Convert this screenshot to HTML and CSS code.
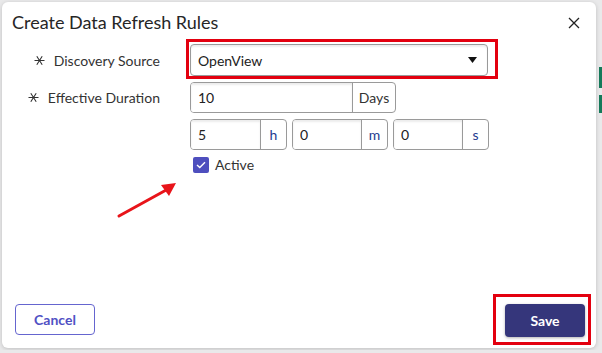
FILE: index.html
```html
<!DOCTYPE html>
<html>
<head>
  <title>Create Data Refresh Rules</title>
  <link rel="stylesheet" href="styles.css">
</head>
<body>
  <div class="backdrop">
    <span class="bar bar-1"></span>
    <span class="bar bar-2"></span>
  </div>

  <div class="dialog">
    <div class="dialog-header">
      <h1>Create Data Refresh Rules</h1>
      <button class="close" type="button" aria-label="Close">
        <svg width="12" height="12" viewBox="0 0 12 12"><path d="M1 1L11 11M11 1L1 11" stroke="#222" stroke-width="1.3" fill="none"/></svg>
      </button>
    </div>

    <form class="dialog-body">
      <div class="form-grid">
        <label class="field-label">
          <svg class="req" width="11" height="11" viewBox="0 0 11 11"><path d="M0.5 5.5H10.5M2.8 1.3L8.2 9.7M8.2 1.3L2.8 9.7" stroke="#333" stroke-width="1.1" fill="none"/></svg>
          Discovery Source
        </label>
        <div class="highlight">
          <div class="select">
            <span>OpenView</span>
            <svg width="9" height="6" viewBox="0 0 9 6"><path d="M0 0H9L4.5 6Z" fill="#111"/></svg>
          </div>
        </div>

        <label class="field-label">
          <svg class="req" width="11" height="11" viewBox="0 0 11 11"><path d="M0.5 5.5H10.5M2.8 1.3L8.2 9.7M8.2 1.3L2.8 9.7" stroke="#333" stroke-width="1.1" fill="none"/></svg>
          Effective Duration
        </label>
        <div class="input-group days">
          <input type="text" value="10">
          <span class="addon">Days</span>
        </div>

        <div></div>
        <div class="time-row">
          <div class="input-group">
            <input type="text" value="5">
            <span class="addon">h</span>
          </div>
          <div class="input-group">
            <input type="text" value="0">
            <span class="addon">m</span>
          </div>
          <div class="input-group">
            <input type="text" value="0">
            <span class="addon">s</span>
          </div>
        </div>

        <div></div>
        <label class="check">
          <span class="box">
            <svg width="10" height="8" viewBox="0 0 10 8"><path d="M1 4L3.8 6.6L9 1.2" stroke="#fff" stroke-width="1.4" fill="none"/></svg>
          </span>
          Active
        </label>
      </div>

      <svg class="arrow" width="70" height="46" viewBox="0 0 70 46">
        <path d="M3 42L52 15" stroke="#e8141a" stroke-width="3" stroke-linecap="round" fill="none"/>
        <path d="M60 9L45 11L53 22Z" fill="#e8141a"/>
      </svg>
    </form>

    <div class="dialog-footer">
      <button class="btn btn-cancel" type="button">Cancel</button>
      <button class="btn btn-save highlight-save" type="button">Save</button>
    </div>
  </div>
</body>
</html>
```

FILE: styles.css
```css
body { margin: 0; background: #e9e9ea; font-family: Lato, "Open Sans", Arial, sans-serif; color: #333; }

.backdrop .bar { position: absolute; left: 599px; width: 3px; background: #157a5a; }
.bar-1 { top: 67px; height: 21px; }
.bar-2 { top: 95px; height: 18px; }

.dialog { position: relative; margin: 2px; width: 594px; height: 346px; background: #fff;
          border-radius: 6px; box-shadow: 0 1px 4px rgba(0,0,0,0.18); display: flex; flex-direction: column; }

.dialog-header { height: 42px; padding: 9px 16px 0 10px; box-sizing: border-box;
                 display: flex; justify-content: space-between; align-items: flex-start; }
.dialog-header h1 { margin: 0; font-size: 18px; line-height: 22px; font-weight: 400; color: #262626; }
.close { border: none; background: none; padding: 0; margin-top: 6px; cursor: pointer; }

.dialog-body { position: relative; flex: 1; }
.form-grid { display: grid; grid-template-columns: 158px 300px; column-gap: 30px; row-gap: 6px; }

.field-label { display: flex; align-items: center; justify-content: flex-end; gap: 9px;
               font-size: 14px; color: #333; }
.req { flex: none; }

.highlight { position: relative; }
.highlight::after { content: ""; position: absolute; top: -5px; left: -4px; right: -8px; bottom: -3px;
                    border: 3px solid #e3000f; pointer-events: none; }

.select { height: 32px; width: 298px; box-sizing: border-box; border: 1px solid #9a9a9a; border-radius: 4px;
          display: flex; align-items: center; justify-content: space-between; padding: 0 10px 0 7px;
          font-size: 14px; color: #222; box-shadow: inset 0 2px 2px rgba(0,0,0,0.07); }

.input-group { display: flex; height: 31px; box-sizing: border-box; border: 1px solid #9a9a9a;
               border-radius: 4px; overflow: hidden; }
.input-group input { flex: 1; min-width: 0; border: none; padding: 0 7px; font: inherit; font-size: 14px;
                     color: #222; box-shadow: inset 0 2px 2px rgba(0,0,0,0.08); outline: none; }
.addon { display: flex; align-items: center; justify-content: center; border-left: 1px solid #9a9a9a;
         font-size: 14px; color: #333; padding: 0 4px; min-width: 17px; }
.days { width: 206px; }
.days .addon { width: 34px; }

.time-row { display: grid; grid-template-columns: 97px 96px 96px; gap: 5px; }
.time-row .addon { color: #1d3b8f; }

.check { display: flex; align-items: center; gap: 6px; margin: 0 0 0 3px; font-size: 14px; color: #333; }
.box { width: 16px; height: 16px; background: #4e4fbe; border-radius: 2px;
       display: flex; align-items: center; justify-content: center; }

.arrow { position: absolute; left: 114px; top: 130px; }

.dialog-footer { display: flex; justify-content: space-between; padding: 0 11px 11px 13px; }
.btn { height: 31px; width: 80px; border-radius: 4px; font: inherit; font-size: 14px; font-weight: 700; cursor: pointer; }
.btn-cancel { background: #fff; color: #5050c4; border: 1px solid #6565cf; }
.btn-save { height: 33px; background: #35367b; color: #fff; border: none; box-shadow: 0 1px 3px rgba(0,0,0,0.3); }
.highlight-save { position: relative; }
.highlight-save::after { content: ""; position: absolute; top: -10px; left: -12px; right: -6px; bottom: -8px;
                         border: 3px solid #e3000f; }
```
